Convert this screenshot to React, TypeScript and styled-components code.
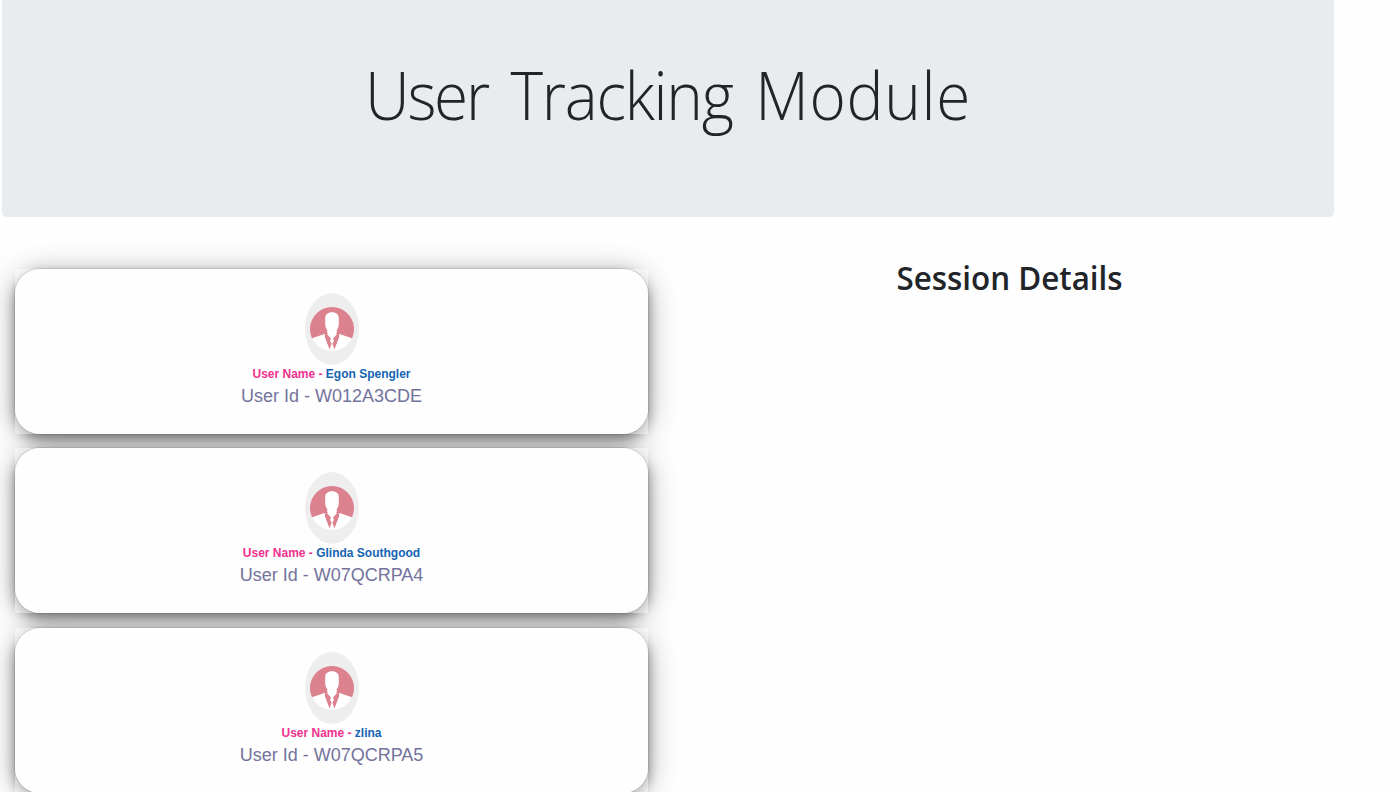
import React from "react";
import styled, { createGlobalStyle } from "styled-components";

const GlobalStyle = createGlobalStyle`
  *, *::before, *::after { box-sizing: border-box; }
  html, body { margin: 0; height: 100%; overflow: hidden; background: #fefefe; }
`;

const Page = styled.div`
  width: 1396px;
  height: 792px;
  overflow: hidden;
  display: flex;
  flex-direction: column;
  background: #fefefe;
  color: #212529;
`;

const Banner = styled.header`
  flex: none;
  width: 1332px;
  height: 217px;
  margin-left: 2px;
  padding-top: 49px;
  text-align: center;
  background: #e8ecef;
  border-radius: 0 0 5px 5px;
`;

const Title = styled.h1`
  margin: 0;
  font: 300 66px/90px "Open Sans", sans-serif;
  word-spacing: 7px;
  white-space: nowrap;
  transform: scaleX(0.94);
`;

const Word = styled.span<{ $tracking: number }>`
  letter-spacing: ${({ $tracking }) => $tracking}px;
`;

const Columns = styled.main`
  flex: none;
  display: grid;
  grid-template-columns: 633px 723px;
  margin: 52px 0 0 15px;
`;

const UserList = styled.section`
  display: flex;
  flex-direction: column;
  gap: 14.4px;
`;

const Card = styled.article`
  height: 165px;
  border-radius: 25px;
  box-shadow: 0 5px 12px rgba(0, 0, 0, 0.4), 0 4px 30px rgba(0, 0, 0, 0.32);
`;

const CardBody = styled.div`
  position: relative;
  z-index: 1;
  height: 100%;
  background: rgba(255, 255, 255, 0.45);
`;

const CardPanel = styled.div`
  height: 100%;
  display: flex;
  flex-direction: column;
  align-items: center;
  padding-top: 24px;
  border-radius: 25px;
  background: #fefefe;
  box-shadow: 0 0 0 1px rgba(0, 0, 0, 0.09);
  font-family: "Liberation Sans", Arial, sans-serif;
`;

const AvatarFrame = styled.div`
  width: 54px;
  height: 72px;
  border-radius: 50%;
  background: #eeeeee;
  display: grid;
  place-items: center;
`;

const UserName = styled.div`
  height: 18px;
  font-size: 12px;
  font-weight: 700;
  line-height: 18px;
  color: #f0318f;
  white-space: nowrap;
`;

const NameValue = styled.span`
  color: #1464b4;
`;

const UserId = styled.div`
  font-size: 18px;
  line-height: 26px;
  color: #73739c;
  white-space: nowrap;
`;

const Session = styled.section`
  text-align: center;
`;

const SessionTitle = styled.h2`
  margin: -14px 0 0;
  font: 600 33px/46px "Open Sans", sans-serif;
  white-space: nowrap;
  transform: scaleX(0.95);
`;

const Avatar = () => (
  <svg width="44" height="44" viewBox="0 0 44 44" aria-hidden="true">
    <circle cx="22" cy="22" r="21.8" fill="#fff" />
    <path d="M2 31.2A22 22 0 1 1 42 31.2L29.5 27H14.5Z" fill="#dc818e" />
    <path d="M15 25L21 31.5L20 34L21.6 36.5L19.6 42.5L14.8 30Z" fill="#dc818e" />
    <path d="M29 25L23 31.5L24 34L22.4 36.5L24.4 42.5L29.2 30Z" fill="#dc818e" />
    <path d="M22 5.3C17.5 5.3 15.2 7.6 15.2 11.5V17C15.2 20 16.4 21.8 17.2 23V26L22 31L26.8 26V23C27.6 21.8 28.8 20 28.8 17V11.5C28.8 7.6 26.5 5.3 22 5.3Z" fill="#fff" />
  </svg>
);

const users = [
  { name: "Egon Spengler", id: "W012A3CDE" },
  { name: "Glinda Southgood", id: "W07QCRPA4" },
  { name: "zlina", id: "W07QCRPA5" },
];

export default function App() {
  return (
    <Page>
      <GlobalStyle />
      <Banner>
        <Title>
          <Word $tracking={-2.4}>User</Word> <Word $tracking={-1.3}>Tracking</Word>{" "}
          <Word $tracking={0.7}>Module</Word>
        </Title>
      </Banner>
      <Columns>
        <UserList>
          {users.map((user) => (
            <Card key={user.id}>
              <CardBody>
                <CardPanel>
                  <AvatarFrame>
                    <Avatar />
                  </AvatarFrame>
                  <UserName>
                    User Name - <NameValue>{user.name}</NameValue>
                  </UserName>
                  <UserId>User Id - {user.id}</UserId>
                </CardPanel>
              </CardBody>
            </Card>
          ))}
        </UserList>
        <Session>
          <SessionTitle>Session Details</SessionTitle>
        </Session>
      </Columns>
    </Page>
  );
}
